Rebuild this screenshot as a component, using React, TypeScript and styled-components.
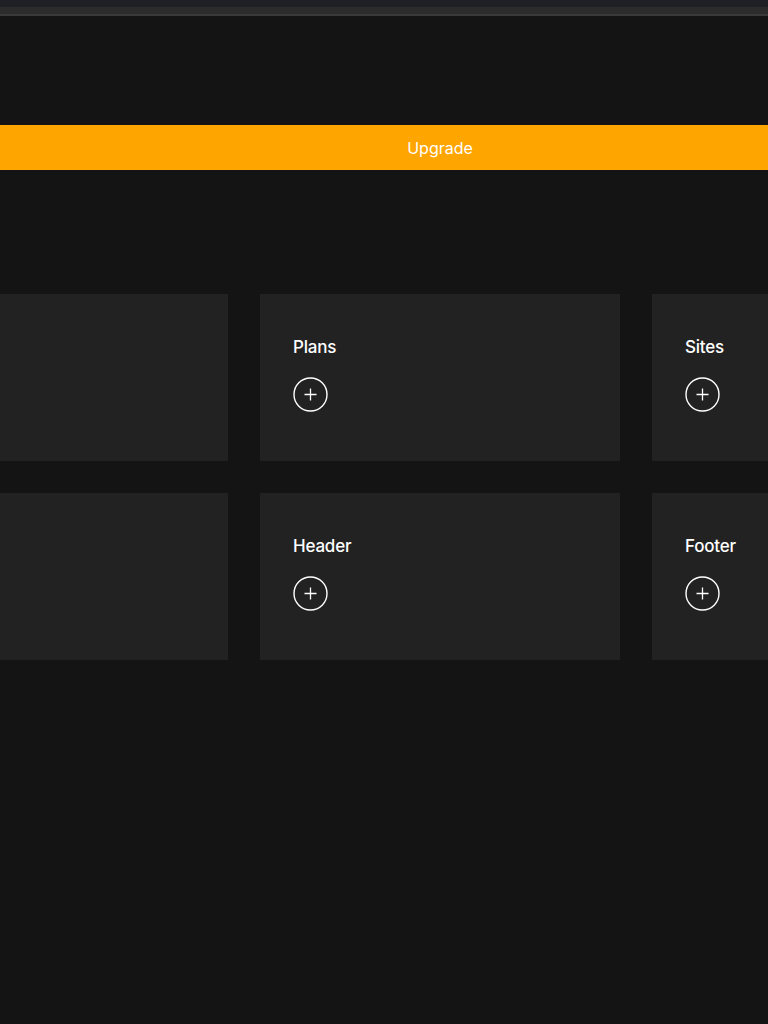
import React from "react";
import styled, {createGlobalStyle} from "styled-components";

const GlobalStyle = createGlobalStyle`
html, body {
margin: 0;
padding: 0;
background: #141414;
font-family: Inter, "Liberation Sans", sans-serif;
}
`

const Page = styled.div`
width: 768px;
height: 1024px;
overflow: hidden;
background: #141414;
display: flex;
flex-direction: column;
`

const TopBar = styled.div`
height: 7px;
background: #1f2026;
`
const ToolStrip = styled.div`
height: 7px;
background: #2c2c2c;
border-bottom: 2px solid #3a3a3a;
`

const Content = styled.div`
width: 1144px;
margin-left: -132px;
display: flex;
flex-direction: column;
padding-top: 109px;
`

const Banner = styled.div`
height: 45px;
background: #ffa500;
color: #fff;
font-size: 16px;
display: flex;
align-items: center;
justify-content: center;
`

const Grid = styled.div`
margin-top: 124px;
display: grid;
grid-template-columns: repeat(3, 360px);
grid-auto-rows: 167px;
gap: 32px;
`

const Card = styled.div`
background: #222222;
padding: 42px 33px 0;
box-sizing: border-box;
display: flex;
flex-direction: column;
align-items: flex-start;
`

const Title = styled.div`
color: #fff;
font-size: 17px;
font-weight: 500;
line-height: 22px;
letter-spacing: -0.2px;
`

const AddButton = styled.button`
margin-top: 19px;
width: 35px;
height: 35px;
padding: 0;
border: none;
background: transparent;
display: flex;
cursor: pointer;
`

const PlusCircle = () => (
    <svg width="35" height="35" viewBox="0 0 35 35" fill="none" stroke="#fff">
        <circle cx="17.5" cy="17.5" r="16.5" strokeWidth="1.4"/>
        <path d="M17.5 11.5v12M11.5 17.5h12" strokeWidth="1.3"/>
    </svg>
)

const cards = ['', 'Plans', 'Sites', '', 'Header', 'Footer']

export default function App() {
    return <Page>
        <GlobalStyle/>
        <TopBar/>
        <ToolStrip/>
        <Content>
            <Banner>Upgrade</Banner>
            <Grid>
                {cards.map((c, i) => <Card key={i}>
                    {c && <>
                        <Title>{c}</Title>
                        <AddButton aria-label={'add ' + c}><PlusCircle/></AddButton>
                    </>}
                </Card>)}
            </Grid>
        </Content>
    </Page>
}
